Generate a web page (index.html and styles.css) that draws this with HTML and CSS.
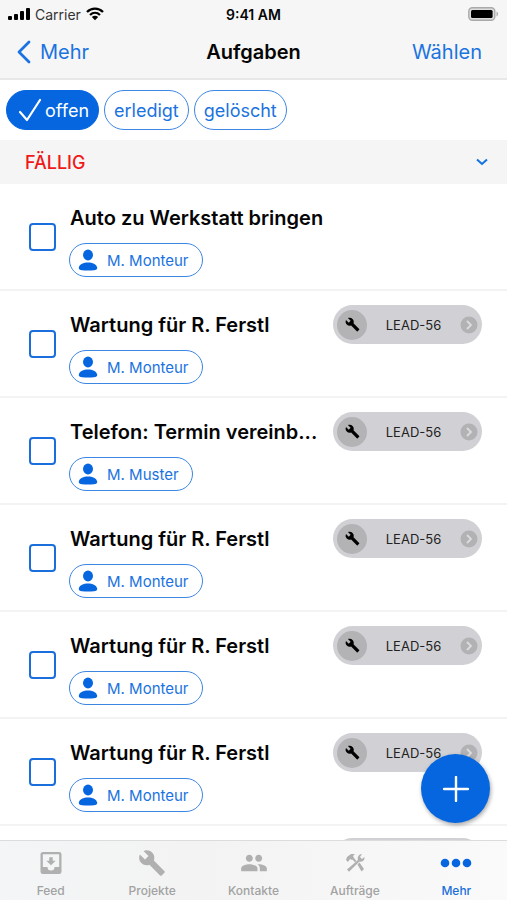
FILE: index.html
```html
<!DOCTYPE html>
<html lang="de">
<head>
<meta charset="utf-8">
<meta name="viewport" content="width=device-width, initial-scale=1">
<title>Aufgaben</title>
<link rel="stylesheet" href="styles.css">
</head>
<body>
<svg class="sprite" aria-hidden="true">
  <symbol id="person" viewBox="0 0 20 22"><ellipse cx="10" cy="6" rx="5" ry="5.400"/><path d="M.8 18.500C1.500 15 5.500 13.400 10 13.400s8.500 1.600 9.200 5.100c.3 1.800-1.200 2.500-3.200 2.700-4 .4-8 .4-12 0-2-.2-3.500-.9-3.200-2.700z"/></symbol>
  <symbol id="wrench" viewBox="0 0 24 24"><path d="M22.700 19l-9.100-9.100c.9-2.300.4-5-1.500-6.900-2-2-5-2.400-7.400-1.300L9 6 6 9 1.600 4.700C.4 7.100.9 10.100 2.900 12.100c1.900 1.900 4.600 2.400 6.900 1.500l9.100 9.100c.4.4 1 .4 1.400 0l2.300-2.300c.5-.4.5-1.100.1-1.400z"/></symbol>
  <symbol id="go" viewBox="0 0 18 18"><circle cx="9" cy="9" r="8.500" fill="#b2b2b5"/><path d="M7 5l4 4-4 4" fill="none" stroke="#dcdcdf" stroke-width="1.800"/></symbol>
</svg>

<div class="status">
  <div class="carrier">
    <svg width="22" height="14" viewBox="0 0 22 14"><rect x="0" y="9" width="4" height="4" rx="1"/><rect x="6" y="7" width="4" height="6" rx="1"/><rect x="12" y="4" width="4" height="9" rx="1"/><rect x="18" y="1" width="4" height="12" rx="1"/></svg>
    <span>Carrier</span>
    <svg width="18" height="14" viewBox="0 0 18 14"><path d="M1 5c4.500-4.400 11.500-4.400 16 0M4 8c3-2.800 7-2.800 10 0" fill="none" stroke="#000" stroke-width="2.300"/><path d="M5.800 10c2-1.600 4.400-1.600 6.400 0L9 13.300z"/></svg>
  </div>
  <div class="time">9:41 AM</div>
  <div class="battery">
    <svg width="31" height="14" viewBox="0 0 31 14"><rect x=".8" y=".8" width="26" height="12.400" rx="3.500" fill="#ddd" stroke="#aaa" stroke-width="1.400"/><rect x="3" y="3" width="21.600" height="8" rx="1.500"/><path d="M28.500 4.500c2 .8 2 4.200 0 5z" fill="#aaa"/></svg>
  </div>
</div>

<header class="nav">
  <a class="back" href="#mehr"><svg width="15" height="24" viewBox="0 0 15 24"><path d="M13 2L3 12l10 10" fill="none" stroke="currentColor" stroke-width="2.800" stroke-linecap="round" stroke-linejoin="round"/></svg>Mehr</a>
  <h1>Aufgaben</h1>
  <button class="select" type="button">Wählen</button>
</header>

<div class="filters">
  <button class="filter active" type="button"><svg width="24" height="24" viewBox="0 0 24 24"><path d="M2 14l7 8L22 2" fill="none" stroke="currentColor" stroke-width="2.200" stroke-linecap="round" stroke-linejoin="round"/></svg>offen</button>
  <button class="filter" type="button">erledigt</button>
  <button class="filter" type="button">gelöscht</button>
</div>

<main>
  <button class="section" type="button"><span>FÄLLIG</span><svg width="12" height="8" viewBox="0 0 12 8"><path d="M1 1.500l5 4.500 5-4.500" fill="none" stroke="#1272e0" stroke-width="2"/></svg></button>
  <ul class="tasks">
    <li class="task">
      <input type="checkbox" aria-label="Auto zu Werkstatt bringen">
      <div class="body"><h2>Auto zu Werkstatt bringen</h2><button class="person" type="button"><svg><use href="#person"/></svg>M. Monteur</button></div>
    </li>
    <li class="task">
      <input type="checkbox" aria-label="Wartung für R. Ferstl">
      <div class="body"><h2>Wartung für R. Ferstl</h2><button class="person" type="button"><svg><use href="#person"/></svg>M. Monteur</button></div>
      <a class="lead" href="#lead-56"><span class="badge"><svg><use href="#wrench"/></svg></span><span class="code">LEAD-56</span><svg class="go"><use href="#go"/></svg></a>
    </li>
    <li class="task">
      <input type="checkbox" aria-label="Telefon: Termin vereinb...">
      <div class="body"><h2>Telefon: Termin vereinb...</h2><button class="person" type="button"><svg><use href="#person"/></svg>M. Muster</button></div>
      <a class="lead" href="#lead-56"><span class="badge"><svg><use href="#wrench"/></svg></span><span class="code">LEAD-56</span><svg class="go"><use href="#go"/></svg></a>
    </li>
    <li class="task">
      <input type="checkbox" aria-label="Wartung für R. Ferstl">
      <div class="body"><h2>Wartung für R. Ferstl</h2><button class="person" type="button"><svg><use href="#person"/></svg>M. Monteur</button></div>
      <a class="lead" href="#lead-56"><span class="badge"><svg><use href="#wrench"/></svg></span><span class="code">LEAD-56</span><svg class="go"><use href="#go"/></svg></a>
    </li>
    <li class="task">
      <input type="checkbox" aria-label="Wartung für R. Ferstl">
      <div class="body"><h2>Wartung für R. Ferstl</h2><button class="person" type="button"><svg><use href="#person"/></svg>M. Monteur</button></div>
      <a class="lead" href="#lead-56"><span class="badge"><svg><use href="#wrench"/></svg></span><span class="code">LEAD-56</span><svg class="go"><use href="#go"/></svg></a>
    </li>
    <li class="task">
      <input type="checkbox" aria-label="Wartung für R. Ferstl">
      <div class="body"><h2>Wartung für R. Ferstl</h2><button class="person" type="button"><svg><use href="#person"/></svg>M. Monteur</button></div>
      <a class="lead" href="#lead-56"><span class="badge"><svg><use href="#wrench"/></svg></span><span class="code">LEAD-56</span><svg class="go"><use href="#go"/></svg></a>
    </li>
    <li class="task next">
      <a class="lead" href="#next" aria-label="Nächster Auftrag"></a>
    </li>
  </ul>
  <button class="add" type="button" aria-label="Neue Aufgabe"><svg width="26" height="26" viewBox="0 0 26 26"><path d="M13 1v24M1 13h24" stroke="#fff" stroke-width="2.400" stroke-linecap="round"/></svg></button>
</main>

<nav class="tabs">
  <a href="#feed"><svg width="28" height="28" viewBox="0 0 24 24"><path fill-rule="evenodd" d="M5 2.500h14a2 2 0 0 1 2 2v15a2 2 0 0 1-2 2H5a2 2 0 0 1-2-2v-15c0-1.100.9-2 2-2zm0 2v11h4a3 3 0 0 0 6 0h4v-11zm5.500 2.500h3v3H16l-4 4-4-4h2.500z"/></svg>Feed</a>
  <a href="#projekte"><svg width="28" height="28" viewBox="0 0 24 24"><use href="#wrench"/></svg>Projekte</a>
  <a href="#kontakte"><svg width="28" height="28" viewBox="0 0 24 24"><path d="M16 11c1.660 0 2.990-1.340 2.990-3S17.660 5 16 5s-3 1.340-3 3 1.340 3 3 3zm-8 0c1.660 0 2.990-1.340 2.990-3S9.660 5 8 5 5 6.340 5 8s1.340 3 3 3zm0 2c-2.330 0-7 1.170-7 3.500V19h14v-2.500c0-2.330-4.670-3.500-7-3.500zm8 0c-.29 0-.62.020-.97.050 1.160.84 1.970 1.970 1.970 3.450V19h6v-2.500c0-2.330-4.670-3.500-7-3.500z"/></svg>Kontakte</a>
  <a href="#auftraege"><svg width="28" height="28" viewBox="0 0 28 28"><path d="M5 11l1-3 4-3h4l-2 2 1 2-2 2-2-1-2 3zM16.500 15.500l2-2L23 20l-2.500 2.500z"/><path d="M6 20.500L17 11c-1-3 1-6 4-6l-2 3 2 2 2.500-2c.5 3-2 5.500-5 4.500L8 22.800z"/><path d="M11 10l1.500-1.500 3 3.500-1.500 1.300z"/></svg>Aufträge</a>
  <a class="current" href="#mehr"><svg width="32" height="28" viewBox="0 0 32 28"><circle cx="5" cy="14" r="4.300"/><circle cx="16" cy="14" r="4.300"/><circle cx="27" cy="14" r="4.300"/></svg>Mehr</a>
</nav>
</body>
</html>
```
FILE: styles.css
```css
* {
  box-sizing: border-box;
}

body {
  margin: 0;
  height: 100vh;
  display: flex;
  flex-direction: column;
  overflow: hidden;
  background: #fff;
  color: #050505;
  font-family: Inter, "Liberation Sans", sans-serif;
}

button {
  font: inherit;
  cursor: pointer;
}

a {
  text-decoration: none;
}

svg {
  flex: none;
}

.sprite {
  position: absolute;
  width: 0;
  height: 0;
}

.status,
.nav {
  display: grid;
  grid-template-columns: 1fr auto 1fr;
  align-items: center;
  background: #f6f6f6;
}

.status {
  height: 28px;
  padding: 0 8px;
  font-size: 14px;
}

.carrier {
  display: flex;
  align-items: center;
  gap: 5px;
  color: #333;
}

.time {
  font-weight: 600;
}

.battery {
  display: flex;
  justify-content: flex-end;
}

.nav {
  height: 52px;
  padding: 0 16px 2px;
  border-bottom: 2px solid #e8e8e8;
  font-size: 20px;
}

.back {
  display: flex;
  align-items: center;
  gap: 9px;
  color: #1a73e0;
}

.nav h1 {
  margin: 0;
  font-size: 20px;
  font-weight: 600;
}

.select {
  justify-self: end;
  padding: 0 9px 0 0;
  border: 0;
  background: none;
  color: #1a73e0;
}

.filters {
  display: flex;
  gap: 5px;
  padding: 10px 6px;
}

.filter {
  display: flex;
  align-items: center;
  gap: 3px;
  height: 40px;
  padding: 0 9px;
  border: 1px solid #3c86e4;
  border-radius: 20px;
  background: #fff;
  color: #1a73e0;
  font-size: 18px;
}

.filter.active {
  padding: 0 9px 0 11px;
  border-color: #0566e0;
  background: #0566e0;
  color: #fff;
}

main {
  position: relative;
  flex: 1;
  min-height: 0;
  display: flex;
  flex-direction: column;
}

.section {
  display: flex;
  align-items: center;
  justify-content: space-between;
  flex: none;
  height: 44px;
  padding: 0 19px 0 25px;
  border: 0;
  background: #f5f5f5;
  color: #f01818;
  font-size: 18px;
  font-weight: 500;
}

.tasks {
  flex: 1;
  min-height: 0;
  margin: 0;
  padding: 0;
  overflow: hidden;
  list-style: none;
}

.task {
  display: flex;
  align-items: flex-start;
  height: 107px;
  padding: 14px 25px 0 29px;
  border-bottom: 2px solid #f3f3f3;
}

.task input {
  appearance: none;
  flex: none;
  width: 27px;
  height: 28px;
  margin: 25px 13px 0 0;
  border: 2px solid #1a6fdc;
  border-radius: 4px;
  background: #fff;
}

.body {
  flex: 1;
  min-width: 0;
}

.task h2 {
  margin: 0 0 5px 1px;
  overflow: hidden;
  font-size: 20px;
  font-weight: 600;
  line-height: 40px;
  text-overflow: ellipsis;
  white-space: nowrap;
}

.person {
  display: flex;
  align-items: center;
  gap: 9px;
  height: 34px;
  padding: 0 13px 0 8px;
  border: 1px solid #3c86e4;
  border-radius: 17px;
  background: #fff;
  color: #1a73e0;
  font-size: 15px;
}

.person svg {
  width: 20px;
  height: 22px;
  fill: #0566e0;
}

.lead {
  display: flex;
  align-items: center;
  flex: none;
  width: 149px;
  height: 39px;
  padding: 0 4px;
  border-radius: 20px;
  background: #d1d1d5;
  color: #222;
  font-size: 13px;
}

.task.next {
  justify-content: flex-end;
  padding-top: 12px;
}

.badge {
  display: grid;
  place-items: center;
  width: 30px;
  height: 30px;
  border-radius: 50%;
  background: #b3b3b6;
}

.badge svg {
  width: 15px;
  height: 15px;
  fill: #000;
}

.code {
  flex: 1;
  text-align: center;
}

.go {
  width: 18px;
  height: 18px;
}

.add {
  position: absolute;
  right: 17px;
  bottom: 17px;
  display: grid;
  place-items: center;
  width: 69px;
  height: 69px;
  padding: 0;
  border: 0;
  border-radius: 50%;
  background: #0566e0;
  box-shadow: 1px 2px 4px rgba(0, 0, 0, 0.35);
}

.tabs {
  display: flex;
  flex: none;
  height: 60px;
  border-top: 1px solid #dcdcdc;
  background: linear-gradient(to right, #f3f5f6, #f3f3f3 40%, #fafafa);
  font-size: 12px;
  font-weight: 500;
}

.tabs a {
  display: flex;
  flex: 1;
  flex-direction: column;
  align-items: center;
  gap: 6px;
  padding-top: 8px;
  color: #a2a2a2;
}

.tabs svg {
  fill: #b0b0b0;
}

.tabs .current {
  color: #1a6fdc;
}

.tabs .current svg {
  fill: #0566e0;
}
```
